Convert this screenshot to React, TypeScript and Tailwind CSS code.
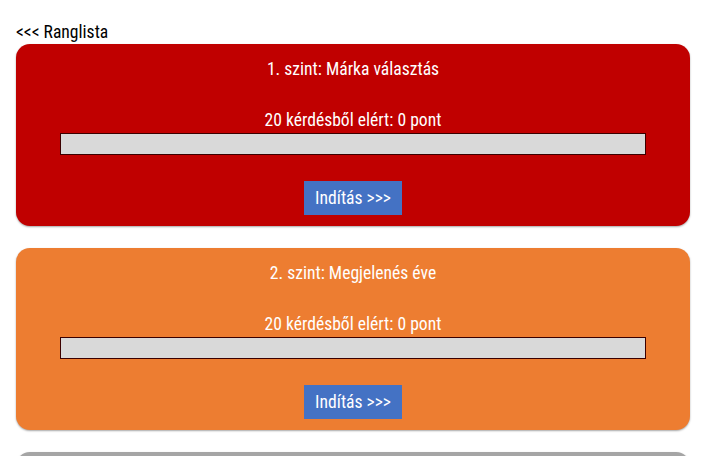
import type { FC } from 'react';

type Level = { id: number; title: string; color: string; total: number; score: number };

const levels: Level[] = [
    { id: 1, title: '1. szint: Márka választás', color: 'bg-[#c00000]', total: 20, score: 0 },
    { id: 2, title: '2. szint: Megjelenés éve', color: 'bg-[#ed7d31]', total: 20, score: 0 },
];

const LevelCard: FC<{ level: Level }> = ({ level }) => (
    <div
        className={`flex h-[182px] flex-col items-center rounded-[14px] pt-[12px] text-white shadow-[0_1px_2px_rgba(0,0,0,0.35)] ${level.color}`}
    >
        <div className="h-[26px] text-[17.6px] leading-[26px]">{level.title}</div>
        <div className="mt-[25px] h-[26px] text-[17.6px] leading-[26px]">
            {level.total} kérdésből elért: {level.score} pont
        </div>
        <div className="h-[22px] w-[586px] border border-[#3a0000] bg-[#d9d9d9]">
            <div
                className="h-full bg-[#70ad47]"
                style={{ width: `${(level.score / level.total) * 100}%` }}
            />
        </div>
        <button className="mt-[26px] h-[34px] w-[98px] bg-[#4472c4] text-[17.6px] text-white">
            Indítás &gt;&gt;&gt;
        </button>
    </div>
);

export default function App() {
    return (
        <div
            className="h-[456px] overflow-hidden bg-white px-[16px] pt-[20px] text-black"
            style={{ fontFamily: '"Roboto Condensed", Roboto, sans-serif' }}
        >
            <div className="w-[674px]">
                <div className="h-[24px] text-[17.6px] leading-[24px]">&lt;&lt;&lt; Ranglista</div>
                <div className="flex flex-col gap-[22px]">
                    {levels.map((level) => (
                        <LevelCard key={level.id} level={level} />
                    ))}
                    {/* next level, locked (grey) — only its top edge is in view */}
                    <div className="h-[182px] rounded-[14px] bg-[#a5a5a5] shadow-[0_1px_2px_rgba(0,0,0,0.35)]" />
                </div>
            </div>
        </div>
    );
}
